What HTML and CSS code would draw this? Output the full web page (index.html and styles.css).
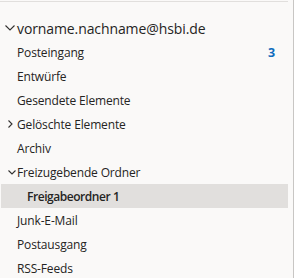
FILE: index.html
```html
<!DOCTYPE html>
<html lang="de">
<head>
  <meta charset="UTF-8">
  <title>Ordner</title>
  <link rel="stylesheet" href="styles.css">
</head>
<body>
  <nav class="folder-pane">
    <div class="pane-top"></div>
    <div class="account">
      <svg class="chev chev-big" width="10" height="6" viewBox="0 0 10 6"><polyline points="0.5,0.5 5,5 9.5,0.5"/></svg>
      <span class="account-name">vorname.nachname@hsbi.de</span>
    </div>
    <ul class="folders">
      <li class="folder"><span class="name">Posteingang</span><span class="count">3</span></li>
      <li class="folder"><span class="name">Entwürfe</span></li>
      <li class="folder"><span class="name">Gesendete Elemente</span></li>
      <li class="folder">
        <svg class="chev chev-right" width="5" height="8" viewBox="0 0 5 8"><polyline points="0.5,0.5 4,4 0.5,7.5"/></svg>
        <span class="name">Gelöschte Elemente</span>
      </li>
      <li class="folder"><span class="name">Archiv</span></li>
      <li class="folder">
        <svg class="chev chev-down" width="8" height="5" viewBox="0 0 8 5"><polyline points="0.5,0.5 4,4 7.5,0.5"/></svg>
        <span class="name">Freizugebende Ordner</span>
      </li>
      <li class="folder sub selected"><span class="name">Freigabeordner 1</span></li>
      <li class="folder"><span class="name">Junk-E-Mail</span></li>
      <li class="folder"><span class="name">Postausgang</span></li>
      <li class="folder"><span class="name">RSS-Feeds</span></li>
    </ul>
  </nav>
</body>
</html>
```

FILE: styles.css
```css
body {
  margin: 0;
  background: #ffffff;
  font-family: "Open Sans", "Noto Sans", sans-serif;
  color: #252423;
}

.folder-pane {
  width: 293px;
  height: 278px;
  background: #faf9f8;
  border-right: 1px solid #c8c6c4;
  overflow: hidden;
}

.pane-top {
  width: 288px;
  height: 1px;
  margin-top: 1px;
  background: #e1dfdd;
}

.account {
  display: flex;
  align-items: center;
  height: 24px;
  margin-top: 14px;
  font-size: 14px;
  letter-spacing: -0.1px;
}

.chev {
  fill: none;
  stroke: #323130;
  stroke-width: 1.1;
}

.chev-big {
  margin-left: 5px;
  margin-right: 2px;
}

.folders {
  list-style: none;
  margin: 0;
  padding: 0;
}

.folder {
  position: relative;
  display: flex;
  align-items: center;
  width: 287px;
  height: 24px;
  margin-left: 1px;
  padding-left: 16px;
  box-sizing: border-box;
  font-size: 12px;
  letter-spacing: -0.15px;
}

.folder .chev {
  position: absolute;
}

.chev-right {
  left: 7px;
  top: 8px;
}

.chev-down {
  left: 7px;
  top: 10px;
}

.folder.sub {
  padding-left: 26px;
  font-weight: 600;
  letter-spacing: -0.45px;
}

.folder.selected {
  background: #e1dfdd;
}

.count {
  margin-left: auto;
  margin-right: 13px;
  color: #0f6cbd;
  font-weight: 700;
  font-size: 12.5px;
}
```
